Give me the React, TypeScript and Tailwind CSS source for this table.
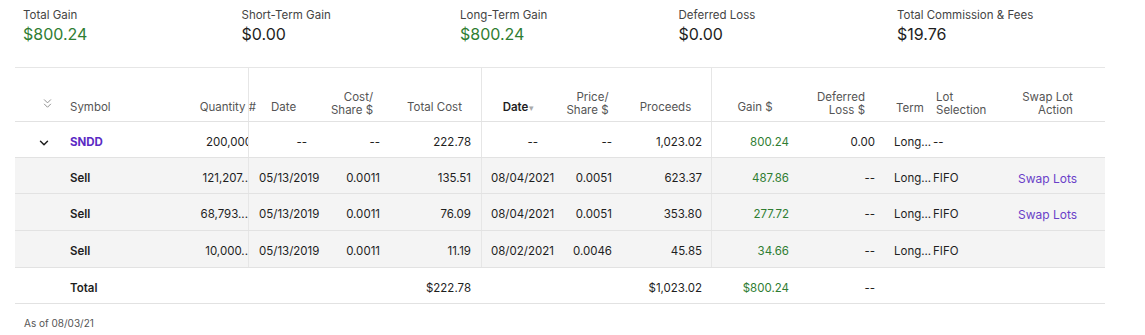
import { ChevronDown, ChevronsDown } from 'lucide-react';
import { ReactNode } from 'react';

const font = { fontFamily: 'Inter, "Liberation Sans", sans-serif' };

const cols =
  'grid grid-cols-[40px_95px_98px_68px_72px_93px_74px_65px_91px_87px_86px_46px_60px_115px]';

const summary = [
  { label: 'Total Gain', value: '$800.24', green: true },
  { label: 'Short-Term Gain', value: '$0.00' },
  { label: 'Long-Term Gain', value: '$800.24', green: true },
  { label: 'Deferred Loss', value: '$0.00' },
  { label: 'Total Commission & Fees', value: '$19.76' },
];

const lots = [
  { h: 'h-[36px]', qty: '121,207..', acq: '05/13/2019', cps: '0.0011', cost: '135.51', sold: '08/04/2021', pps: '0.0051', proceeds: '623.37', gain: '487.86', swap: true },
  { h: 'h-[37px]', qty: '68,793...', acq: '05/13/2019', cps: '0.0011', cost: '76.09', sold: '08/04/2021', pps: '0.0051', proceeds: '353.80', gain: '277.72', swap: true },
  { h: 'h-[37px]', qty: '10,000..', acq: '05/13/2019', cps: '0.0011', cost: '11.19', sold: '08/02/2021', pps: '0.0046', proceeds: '45.85', gain: '34.66', swap: false },
];

function H({ children, className = '' }: { children: ReactNode; className?: string }) {
  return <div className={`flex items-end leading-[13px] ${className}`}>{children}</div>;
}

function C({ children, className = '' }: { children?: ReactNode; className?: string }) {
  return <div className={`flex items-center whitespace-nowrap pt-[6px] ${className}`}>{children}</div>;
}

export default function App() {
  return (
    <div className="bg-white w-[1145px] h-[335px] text-[#1e1e1e]" style={font}>
      {/* Summary */}
      <div className="flex pl-[23px] pt-[8px] h-[67px]">
        {summary.map((s) => (
          <div key={s.label} className="w-[218.5px]">
            <div className="text-[11.5px] text-[#444] leading-[14px]">{s.label}</div>
            <div className={`text-[16px] leading-[20px] mt-[2px] ${s.green ? 'text-[#2f7d32]' : 'text-[#1e1e1e]'}`}>
              {s.value}
            </div>
          </div>
        ))}
      </div>

      {/* Table */}
      <div className="ml-[15px] w-[1090px] border-t border-[#e6e6e6] text-[11.5px]">
        {/* header */}
        <div className={`${cols} h-[54px] border-b border-[#e2e2e2] text-[#555]`}>
          <H className="pl-[25px] pb-[10px] text-[#8a8a8a]">
            <ChevronsDown size={15} strokeWidth={1.5} />
          </H>
          <H className="pl-[15px] pb-[7px]">Symbol</H>
          <H className="justify-end pb-[7px]">
            <span className="mr-[-8px]">Quantity #</span>
          </H>
          <H className="border-l border-[#e6e6e6] pl-[22px] pb-[7px]">Date</H>
          <H className="justify-center pb-[4px]">
            <div className="text-right">Cost/<br />Share $</div>
          </H>
          <H className="justify-center pb-[7px]">Total Cost</H>
          <H className="border-l border-[#e6e6e6] justify-center pb-[7px] font-semibold text-[#1e1e1e]">
            Date<span className="text-[#aaa] text-[9px] ml-[1px] font-normal">▾</span>
          </H>
          <H className="justify-center pb-[4px]">
            <div className="text-right">Price/<br />Share $</div>
          </H>
          <H className="justify-center pb-[7px]">Proceeds</H>
          <H className="border-l border-[#e6e6e6] justify-center pb-[7px]">Gain $</H>
          <H className="justify-center pb-[4px]">
            <div className="text-right">Deferred<br />Loss $</div>
          </H>
          <H className="pl-[12px] pb-[6px]">Term</H>
          <H className="pl-[6px] pb-[4px]">
            <div>Lot<br />Selection</div>
          </H>
          <H className="justify-center pb-[4px]">
            <div className="text-right">Swap Lot<br />Action</div>
          </H>
        </div>

        {/* symbol row */}
        <div className={`${cols} h-[36px] border-b border-[#e2e2e2]`}>
          <C className="pl-[22px]">
            <ChevronDown size={14} strokeWidth={2.5} />
          </C>
          <C className="pl-[15px] font-bold text-[#5b2bc4]">SNDD</C>
          <C className="justify-end overflow-hidden">
            <span className="mr-[-4px]">200,000</span>
          </C>
          <C className="border-l border-[#e6e6e6] justify-end pr-[9px]">--</C>
          <C className="justify-end pr-[8px]">--</C>
          <C className="justify-end pr-[10px]">222.78</C>
          <C className="border-l border-[#e6e6e6] justify-end pr-[17px]">--</C>
          <C className="justify-end pr-[8px]">--</C>
          <C className="justify-end pr-[9px]">1,023.02</C>
          <C className="border-l border-[#e6e6e6] justify-end pr-[9px] text-[#2f7d32]">800.24</C>
          <C className="justify-end pr-[9px]">0.00</C>
          <C className="pl-[10px]">Long...</C>
          <C className="pl-[3px]">--</C>
          <C />
        </div>

        {/* lot rows */}
        {lots.map((l, i) => (
          <div key={i} className={`${cols} ${l.h} border-b border-[#e2e2e2] bg-[#f4f4f4]`}>
            <C />
            <C className="pl-[15px] font-semibold">Sell</C>
            <C className="justify-end overflow-hidden">{l.qty}</C>
            <C className="border-l border-[#e6e6e6] pl-[10px]">{l.acq}</C>
            <C className="justify-end pr-[8px]">{l.cps}</C>
            <C className="justify-end pr-[10px]">{l.cost}</C>
            <C className="border-l border-[#e6e6e6] pl-[9px]">{l.sold}</C>
            <C className="justify-end pr-[8px]">{l.pps}</C>
            <C className="justify-end pr-[9px]">{l.proceeds}</C>
            <C className="border-l border-[#e6e6e6] justify-end pr-[9px] text-[#2f7d32]">{l.gain}</C>
            <C className="justify-end pr-[9px]">--</C>
            <C className="pl-[10px]">Long...</C>
            <C className="pl-[3px]">FIFO</C>
            <C className="justify-center">
              {l.swap && <span className="text-[#6a3fc8] text-[12px]">Swap Lots</span>}
            </C>
          </div>
        ))}

        {/* total row */}
        <div className={`${cols} h-[36px] border-b border-[#e2e2e2]`}>
          <C />
          <C className="pl-[15px] font-semibold">Total</C>
          <C />
          <C />
          <C />
          <C className="justify-end pr-[10px]">$222.78</C>
          <C />
          <C />
          <C className="justify-end pr-[9px]">$1,023.02</C>
          <C className="justify-end pr-[9px] text-[#2f7d32]">$800.24</C>
          <C className="justify-end pr-[9px]">--</C>
          <C />
          <C />
          <C />
        </div>
      </div>

      <div className="pl-[24px] pt-[12px] text-[10px] text-[#555]">As of 08/03/21</div>
    </div>
  );
}
